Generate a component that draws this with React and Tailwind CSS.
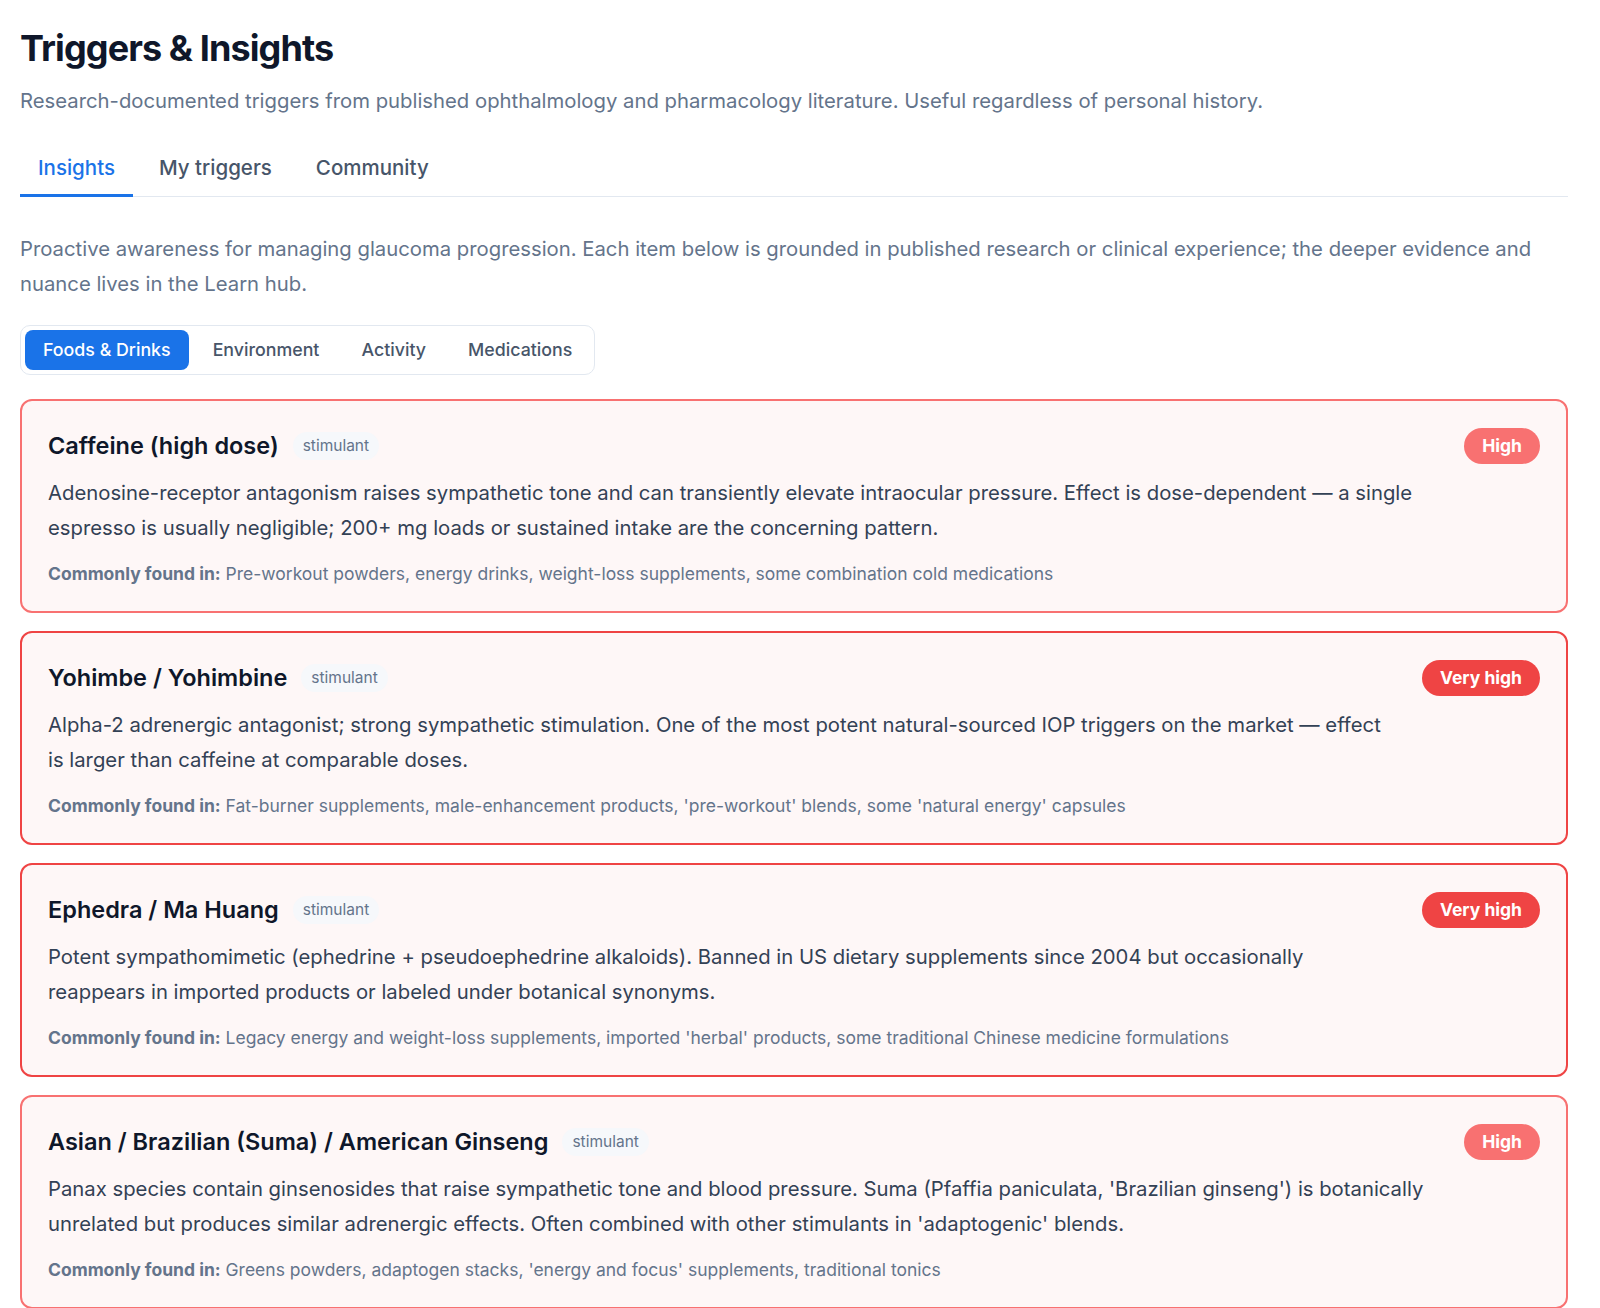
import { useState } from "react";

const triggers = [
  {
    name: "Caffeine (high dose)",
    tag: "stimulant",
    level: "High",
    description:
      "Adenosine-receptor antagonism raises sympathetic tone and can transiently elevate intraocular pressure. Effect is dose-dependent — a single espresso is usually negligible; 200+ mg loads or sustained intake are the concerning pattern.",
    found:
      "Pre-workout powders, energy drinks, weight-loss supplements, some combination cold medications",
  },
  {
    name: "Yohimbe / Yohimbine",
    tag: "stimulant",
    level: "Very high",
    description:
      "Alpha-2 adrenergic antagonist; strong sympathetic stimulation. One of the most potent natural-sourced IOP triggers on the market — effect is larger than caffeine at comparable doses.",
    found:
      "Fat-burner supplements, male-enhancement products, 'pre-workout' blends, some 'natural energy' capsules",
  },
  {
    name: "Ephedra / Ma Huang",
    tag: "stimulant",
    level: "Very high",
    description:
      "Potent sympathomimetic (ephedrine + pseudoephedrine alkaloids). Banned in US dietary supplements since 2004 but occasionally reappears in imported products or labeled under botanical synonyms.",
    found:
      "Legacy energy and weight-loss supplements, imported 'herbal' products, some traditional Chinese medicine formulations",
  },
  {
    name: "Asian / Brazilian (Suma) / American Ginseng",
    tag: "stimulant",
    level: "High",
    description:
      "Panax species contain ginsenosides that raise sympathetic tone and blood pressure. Suma (Pfaffia paniculata, 'Brazilian ginseng') is botanically unrelated but produces similar adrenergic effects. Often combined with other stimulants in 'adaptogenic' blends.",
    found:
      "Greens powders, adaptogen stacks, 'energy and focus' supplements, traditional tonics",
  },
];

const tabs = ["Insights", "My triggers", "Community"];
const categories = ["Foods & Drinks", "Environment", "Activity", "Medications"];

function TriggerCard({ item }) {
  const veryHigh = item.level === "Very high";
  return (
    <div
      className={
        veryHigh
          ? "flex gap-8 rounded-xl border-2 border-[#ef4444] bg-[#fef7f7] px-[26px] pt-[27px] pb-[25px]"
          : "flex gap-8 rounded-xl border-2 border-[#f87171] bg-[#fef7f7] px-[26px] pt-[27px] pb-[25px]"
      }
    >
      <div className="flex-1">
        <div className="flex h-9 items-center gap-3.5">
          <h3 className="text-[23.5px] font-semibold text-[#0f172a]">{item.name}</h3>
          <span className="rounded-full bg-[#f6f8fb] px-2.5 py-0.5 text-[15.5px] text-[#64748b]">
            {item.tag}
          </span>
        </div>
        <p className="mt-3 text-[20.3px] leading-[34.5px] text-[#334155]">
          {item.description}
        </p>
        <p className="mt-[17px] text-[17.5px] leading-6 text-[#64748b]">
          <span className="font-bold">Commonly found in:</span> {item.found}
        </p>
      </div>
      <span
        className={
          veryHigh
            ? "flex h-9 shrink-0 items-center rounded-full bg-[#ef4444] px-[18px] text-[17.5px] font-bold text-white"
            : "flex h-9 shrink-0 items-center rounded-full bg-[#f87171] px-[18px] text-[17.5px] font-bold text-white"
        }
      >
        {item.level}
      </span>
    </div>
  );
}

export default function App() {
  const [tab, setTab] = useState("Insights");
  const [category, setCategory] = useState("Foods & Drinks");

  return (
    <div className="min-h-screen bg-white pl-5 pr-8 pt-7 pb-6 font-['Inter',sans-serif]">
      <h1 className="text-[36px] font-bold leading-10 tracking-tight text-[#0f172a]">
        Triggers &amp; Insights
      </h1>
      <p className="mt-[19px] text-[20.3px] leading-7 text-[#64748b]">
        Research-documented triggers from published ophthalmology and pharmacology
        literature. Useful regardless of personal history.
      </p>

      <div className="mt-[39px] flex gap-2 border-b border-[#e2e8f0]">
        {tabs.map((t) => (
          <button
            key={t}
            onClick={() => setTab(t)}
            className={
              tab === t
                ? "-mb-px border-b-[3px] border-[#1a73e8] px-[18px] pb-[12px] text-[20.5px] font-medium leading-7 text-[#1a73e8]"
                : "-mb-px border-b-[3px] border-transparent px-[18px] pb-[12px] text-[20.5px] font-medium leading-7 text-[#475569]"
            }
          >
            {t}
          </button>
        ))}
      </div>

      <p className="mt-[34px] text-[20.3px] leading-[35px] text-[#64748b]">
        Proactive awareness for managing glaucoma progression. Each item below is
        grounded in published research or clinical experience; the deeper evidence
        and nuance lives in the Learn hub.
      </p>

      <div className="mt-6 inline-flex gap-1.5 rounded-[10px] border border-[#e2e8f0] p-1">
        {categories.map((c) => (
          <button
            key={c}
            onClick={() => setCategory(c)}
            className={
              category === c
                ? "h-[40px] rounded-lg bg-[#1a73e8] px-[18px] text-[17.8px] font-medium text-white"
                : "h-[40px] rounded-lg px-[18px] text-[17.8px] font-medium text-[#475569]"
            }
          >
            {c}
          </button>
        ))}
      </div>

      <div className="mt-6 flex flex-col gap-[18px]">
        {triggers.map((item) => (
          <TriggerCard key={item.name} item={item} />
        ))}
      </div>
    </div>
  );
}
